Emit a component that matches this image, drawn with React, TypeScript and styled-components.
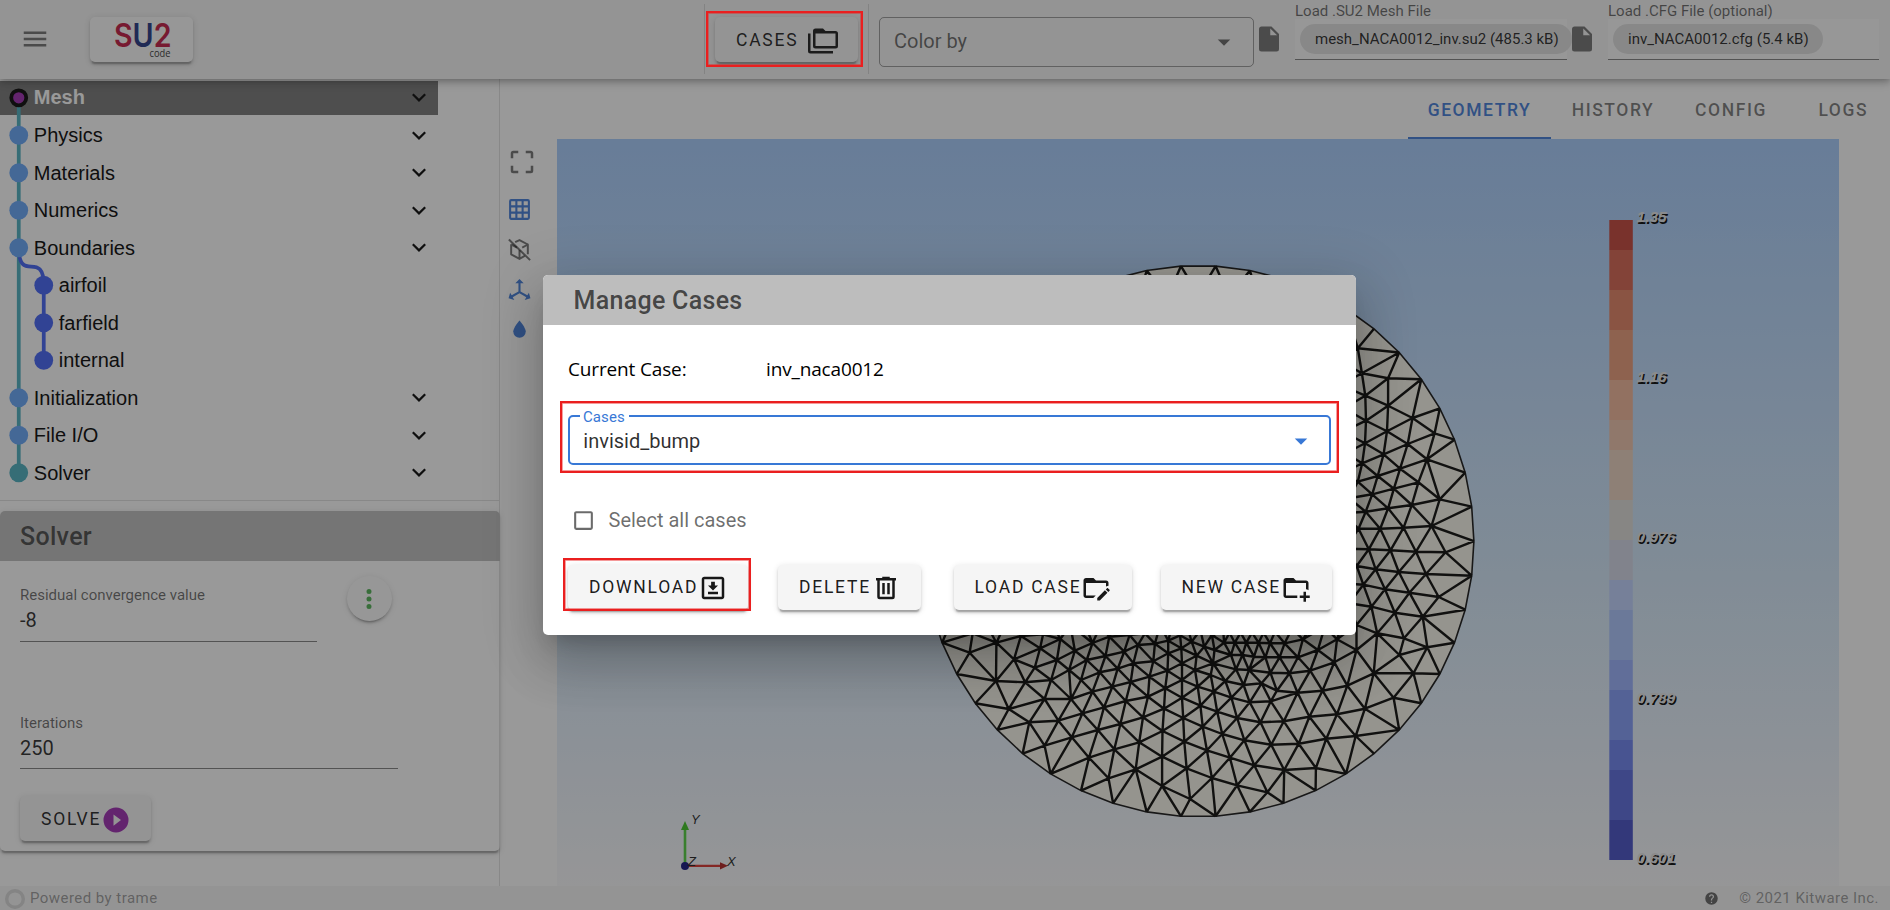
import React from "react";
import styled, { createGlobalStyle, css } from "styled-components";

/* ---------- icon paths (24 x 24 grid) ---------- */
const icons = {
  menu: "M3,6H21V8H3V6M3,11H21V13H3V11M3,16H21V18H3V16Z",
  folders:
    "M22,4H14L12,2H6A2,2 0 0,0 4,4V16A2,2 0 0,0 6,18H22A2,2 0 0,0 24,16V6A2,2 0 0,0 22,4M2,6H0V11H0V20A2,2 0 0,0 2,22H20V20H2V6M6,6V16H22V6H6Z",
  down: "M7,10L12,15L17,10H7Z",
  file: "M13,9V3.5L18.5,9M6,2C4.89,2 4,2.89 4,4V20A2,2 0 0,0 6,22H18A2,2 0 0,0 20,20V8L14,2H6Z",
  free: "M19,3H15V5H19V9H21V5C21,3.89 20.1,3 19,3M19,19H15V21H19A2,2 0 0,0 21,19V15H19M5,15H3V19A2,2 0 0,0 5,21H9V19H5M3,5V9H5V5H9V3H5A2,2 0 0,0 3,5Z",
  grid: "M10,4V8H14V4H10M16,4V8H20V4H16M16,10V14H20V10H16M16,16V20H20V16H16M14,20V16H10V20H14M8,20V16H4V20H8M8,14V10H4V14H8M8,8V4H4V8H8M10,14H14V10H10V14M4,2H20A2,2 0 0,1 22,4V20A2,2 0 0,1 20,22H4C2.92,22 2,21.1 2,20V4A2,2 0 0,1 4,2Z",
  axis: "M12,2L16,6H13V13.85L19.53,17.61L21,15.03L22.5,20.5L17,21.96L18.53,19.35L12,15.58L5.47,19.35L7,21.96L1.5,20.5L3,15.03L4.47,17.61L11,13.85V6H8L12,2Z",
  water:
    "M12,20A6,6 0 0,1 6,14C6,10 12,3.25 12,3.25C12,3.25 18,10 18,14A6,6 0 0,1 12,20Z",
  dots: "M12,16A2,2 0 0,1 14,18A2,2 0 0,1 12,20A2,2 0 0,1 10,18A2,2 0 0,1 12,16M12,10A2,2 0 0,1 14,12A2,2 0 0,1 12,14A2,2 0 0,1 10,12A2,2 0 0,1 12,10M12,4A2,2 0 0,1 14,6A2,2 0 0,1 12,8A2,2 0 0,1 10,6A2,2 0 0,1 12,4Z",
  play: "M10,16.5V7.5L16,12M12,2A10,10 0 0,0 2,12A10,10 0 0,0 12,22A10,10 0 0,0 22,12A10,10 0 0,0 12,2Z",
  help: "M15.07,11.25L14.17,12.17C13.45,12.89 13,13.5 13,15H11V14.5C11,13.39 11.45,12.39 12.17,11.67L13.41,10.41C13.78,10.05 14,9.55 14,9C14,7.89 13.1,7 12,7A2,2 0 0,0 10,9H8A4,4 0 0,1 12,5A4,4 0 0,1 16,9C16,9.88 15.64,10.67 15.07,11.25M13,19H11V17H13M12,2A10,10 0 0,0 2,12A10,10 0 0,0 12,22A10,10 0 0,0 22,12C22,6.47 17.5,2 12,2Z",
  download:
    "M5 3H19C20.1 3 21 3.9 21 5V19C21 20.11 20.11 21 19 21H5C3.9 21 3 20.11 3 19V5C3 3.9 3.9 3 5 3M5 5V19H19V5H5M8 17V15H16V17H8M16 10L12 14L8 10H10.5V7H13.5V10H16Z",
  trash:
    "M9,3V4H4V6H5V19A2,2 0 0,0 7,21H17A2,2 0 0,0 19,19V6H20V4H15V3H9M7,6H17V19H7V6M9,8V17H11V8H9M13,8V17H15V8H13Z",
  folderEdit:
    "M4 18H11.8L9.8 20H4C2.9 20 2 19.1 2 18V6C2 4.9 2.89 4 4 4H10L12 6H20A2 2 0 0 1 22 8V10.17L20.41 10.59L20 11V8H4V18M22.85 14.19L21.87 15.17L19.83 13.13L20.81 12.15C21 11.95 21.33 11.95 21.53 12.15L22.85 13.47C23.05 13.67 23.05 14 22.85 14.19M13 19.94L19.12 13.81L21.16 15.85L15.04 22H13V19.94Z",
  folderPlus:
    "M13 19C13 19.34 13.04 19.67 13.09 20H4C2.9 20 2 19.11 2 18V6C2 4.89 2.89 4 4 4H10L12 6H20C21.1 6 22 6.89 22 8V13.81C21.39 13.46 20.72 13.22 20 13.09V8H4V18H13.09C13.04 18.33 13 18.66 13 19M20 18V15H18V18H15V20H18V23H20V20H23V18H20Z",
  checkbox:
    "M19,3H5C3.89,3 3,3.89 3,5V19A2,2 0 0,0 5,21H19A2,2 0 0,0 21,19V5C21,3.89 20.1,3 19,3M19,5V19H5V5H19Z",
};

type IconName = keyof typeof icons;

const IconSvg = styled.svg<{ $size: number }>`
  display: block;
  flex: none;
  width: ${(p) => p.$size}px;
  height: ${(p) => p.$size}px;
`;

const Icon = ({
  name,
  size = 30,
  color = "currentColor",
}: {
  name: IconName;
  size?: number;
  color?: string;
}) => (
  <IconSvg viewBox="0 0 24 24" $size={size}>
    <path d={icons[name]} fill={color} fillRule="evenodd" />
  </IconSvg>
);

/* ---------- mesh geometry ---------- */
type Pt = [number, number];
const CX = 1198.3 - 557;
const CY = 541.2 - 139;
const R = 275.6;

const lower: number[] = [
  182, 158, 252, 128, 190, 100, 251, 243, 298, 178, 327, 247, 316, 108, 352, 203, 366, 145, 374, 103,
  410, 180, 419, 117, 395, 240, 442, 210, 457, 152, 473, 240, 488, 180, 503, 129, 522, 217, 537, 168,
  547, 110, 569, 206, 586, 155, 600, 105, 622, 135, 610, 190, 603, 246, 652, 230, 662, 184, 666, 131,
  701, 122, 701, 160, 699, 212, 693, 265, 732, 106, 735, 145, 737, 190, 737, 240, 775, 167, 771, 210,
  762, 125, 795, 140, 778, 260, 818, 190, 812, 225, 822, 150, 850, 243, 847, 128, 865, 165, 878, 208,
  875, 128, 895, 165, 912, 210, 898, 255, 905, 128, 925, 170, 945, 250, 937, 128, 955, 172, 968, 218,
  967, 130, 992, 172, 1005, 130, 1018, 220, 1040, 172, 1053, 118, 1092, 150, 1072, 212, 1135, 187,
  1142, 118, 985, 272, 1039, 278, 1104, 272, 1169, 257, 1193, 150, 1238, 220, 1247, 100, 1305, 165,
  1317, 115, 1378, 142, 1342, 220, 1293, 38, 1232, 20, 1366, 50, 1290, 293, 1215, 326, 1193, 75,
  284, 327, 338, 367, 378, 297, 447, 297, 503, 275, 555, 260, 414, 362, 477, 340, 533, 322, 590, 303,
  648, 290, 737, 293, 690, 326, 785, 317, 829, 335, 820, 275, 866, 293, 914, 307, 969, 304, 378, 437,
  449, 412, 517, 390, 576, 372, 635, 352, 740, 354, 686, 393, 791, 380, 842, 402, 881, 354, 942, 367,
  1003, 364, 1070, 350, 1142, 343, 1191, 408, 1114, 416, 1042, 431, 970, 434, 900, 421, 494, 473,
  560, 448, 625, 427, 743, 425, 802, 451, 862, 473, 926, 496, 685, 470, 616, 508, 749, 505, 815, 534,
  881, 556, 960, 577, 1004, 510, 1087, 504, 545, 535, 685, 558, 758, 597,
  135, 60, 215, 50, 280, 60, 345, 70, 395, 65, 445, 75, 480, 65, 525, 75, 565, 65, 615, 75, 640, 100,
  680, 75, 715, 60, 750, 75, 785, 90, 815, 105, 845, 95, 861, 98, 890, 98, 920, 98, 950, 98, 980, 95,
  1025, 85, 1080, 70, 1110, 80, 1160, 60,
];

const right: number[] = [
  1155, 265, 1167, 340, 1243, 355, 1177, 407, 1243, 437, 1314, 474, 1179, 482, 1240, 514, 1378, 520,
  1176, 550, 1230, 583, 1300, 552, 1356, 598, 1168, 610, 1213, 648, 1278, 626, 1331, 667, 1155, 665,
  1197, 703, 1260, 686, 1393, 718, 1178, 755, 1243, 745, 1312, 735, 1369, 798, 1157, 806, 1220, 806,
  1288, 803, 1187, 868, 1250, 871, 1324, 875, 1410, 877, 1152, 918, 1207, 928, 1274, 936, 1353, 942,
  1171, 974, 1234, 988, 1305, 998, 1390, 1011, 1100, 300, 1105, 375, 1115, 445, 1112, 515, 1120, 580,
  1110, 640, 1130, 715, 1110, 760, 1095, 806, 1120, 866, 1090, 915, 1110, 970, 1130, 1030,
];

const buildPoints = (): Pt[] => {
  const pts: Pt[] = [];
  for (let k = 0; k < 50; k++) {
    const a = (k * 2 * Math.PI) / 50;
    pts.push([CX + R * Math.cos(a), CY + R * Math.sin(a)]);
  }
  for (let i = 0; i < lower.length; i += 2)
    pts.push([900 - 557 + lower[i] / 2.6133, 600 - 139 + lower[i + 1] / 3]);
  for (let i = 0; i < right.length; i += 2)
    pts.push([960 - 557 + right[i] / 2.9037, 260 - 139 + right[i + 1] / 3]);
  for (let k = 27; k < 42; k++) {
    const a = ((k + 0.5) * 2 * Math.PI) / 50;
    pts.push([CX + 246 * Math.cos(a), CY + 246 * Math.sin(a)]);
  }
  return pts;
};

/* Bowyer–Watson triangulation, returned as one path of edges */
const triangulate = (input: Pt[]): string => {
  const n = input.length;
  const p: Pt[] = [...input, [-90000, -80000], [90000, -80000], [0, 120000]];
  type Tri = { v: [number, number, number]; x: number; y: number; r: number };
  const make = (a: number, b: number, c: number): Tri => {
    const [ax, ay] = p[a];
    const bx = p[b][0] - ax;
    const by = p[b][1] - ay;
    const cx = p[c][0] - ax;
    const cy = p[c][1] - ay;
    const d = 2 * (bx * cy - by * cx) || 1e-9;
    const ux = (cy * (bx * bx + by * by) - by * (cx * cx + cy * cy)) / d;
    const uy = (bx * (cx * cx + cy * cy) - cx * (bx * bx + by * by)) / d;
    return { v: [a, b, c], x: ax + ux, y: ay + uy, r: ux * ux + uy * uy };
  };
  let tris: Tri[] = [make(n, n + 1, n + 2)];
  for (let i = 0; i < n; i++) {
    const edges = new Map<string, [number, number]>();
    const keep: Tri[] = [];
    for (const t of tris) {
      const dx = p[i][0] - t.x;
      const dy = p[i][1] - t.y;
      if (dx * dx + dy * dy < t.r) {
        for (const [a, b] of [
          [t.v[0], t.v[1]],
          [t.v[1], t.v[2]],
          [t.v[2], t.v[0]],
        ]) {
          const key = a < b ? `${a}-${b}` : `${b}-${a}`;
          if (edges.has(key)) edges.delete(key);
          else edges.set(key, [a, b]);
        }
      } else keep.push(t);
    }
    edges.forEach(([a, b]) => keep.push(make(a, b, i)));
    tris = keep;
  }
  const seen = new Set<string>();
  let d = "";
  for (const t of tris) {
    if (t.v.some((v) => v >= n)) continue;
    for (let e = 0; e < 3; e++) {
      const a = Math.min(t.v[e], t.v[(e + 1) % 3]);
      const b = Math.max(t.v[e], t.v[(e + 1) % 3]);
      if (b < 50 || seen.has(`${a}-${b}`)) continue;
      seen.add(`${a}-${b}`);
      d += `M${p[a][0].toFixed(1)} ${p[a][1].toFixed(1)}L${p[b][0].toFixed(1)} ${p[b][1].toFixed(1)}`;
    }
  }
  return d;
};

const points = buildPoints();
const meshEdges = triangulate(points);
const rim = points
  .slice(0, 50)
  .map((q) => q.map((c) => c.toFixed(1)).join(","))
  .join(" ");

/* ---------- base ---------- */
const Global = createGlobalStyle`
  * { box-sizing: border-box; }
  body { margin: 0; overflow: hidden; font-family: Roboto, "Liberation Sans", sans-serif; color: rgba(0,0,0,.87); }
`;

const Page = styled.div`
  position: relative;
  display: flex;
  flex-direction: column;
  width: 1890px;
  height: 910px;
  overflow: hidden;
  background: #fff;
`;

const raised = css`
  box-shadow: 0 3.75px 1.25px -2.5px rgba(0, 0, 0, 0.2), 0 2.5px 2.5px rgba(0, 0, 0, 0.14),
    0 1.25px 6.25px rgba(0, 0, 0, 0.12);
`;

/* ---------- toolbar ---------- */
const TopBar = styled.header`
  position: relative;
  z-index: 2;
  display: flex;
  flex: none;
  height: 79px;
  background: #f5f5f5;
  box-shadow: 0 2.5px 5px -1.25px rgba(0, 0, 0, 0.2), 0 5px 6.25px rgba(0, 0, 0, 0.14),
    0 1.25px 12.5px rgba(0, 0, 0, 0.12);
`;

const MenuButton = styled.div`
  margin: 23.5px 40px 0 20px;
  color: rgba(0, 0, 0, 0.54);
`;

const LogoCard = styled.div`
  width: 103px;
  height: 45px;
  margin-top: 17px;
  border-radius: 5px;
  background: #fcfcfc;
  ${raised}
  svg {
    display: block;
  }
`;

const Divider = styled.div<{ $left: number }>`
  width: 1px;
  height: 70px;
  margin: 4px 0 0 ${(p) => p.$left}px;
  background: rgba(0, 0, 0, 0.12);
`;

const Button = styled.button<{ $w: number; $gap?: number; $left?: number }>`
  display: flex;
  align-items: center;
  flex: none;
  width: ${(p) => p.$w}px;
  height: 45px;
  margin: 0 0 0 ${(p) => p.$left ?? 0}px;
  padding: 2px 18px 0 21px;
  border: 0;
  border-radius: 5px;
  background: #f5f5f5;
  color: rgba(0, 0, 0, 0.9);
  font: 400 17.5px/1 Roboto, sans-serif;
  letter-spacing: 1.75px;
  white-space: nowrap;
  ${raised}
  svg {
    margin-left: ${(p) => p.$gap ?? 0}px;
  }
`;

const BarSlot = styled.div<{ $left: number; $top: number }>`
  margin: ${(p) => p.$top}px 0 0 ${(p) => p.$left}px;
  color: rgba(0, 0, 0, 0.54);
`;

const ColorBy = styled.div`
  display: flex;
  align-items: center;
  justify-content: space-between;
  width: 375px;
  height: 50px;
  margin: 17px 0 0 10px;
  padding: 0 14px;
  border: 1px solid rgba(0, 0, 0, 0.38);
  border-radius: 5px;
  color: rgba(0, 0, 0, 0.6);
  font-size: 20px;
  span {
    padding-bottom: 2px;
  }
`;

const FileField = styled.div<{ $left: number; $w: number }>`
  width: ${(p) => p.$w}px;
  margin-left: ${(p) => p.$left}px;
  font-size: 15px;
`;

const FileLabel = styled.div`
  height: 19px;
  padding-top: 2px;
  line-height: 18px;
  color: rgba(0, 0, 0, 0.6);
  font-size: 15px;
  white-space: nowrap;
`;

const FileInput = styled.div`
  height: 41px;
  padding: 5px 0 0 5px;
  border-bottom: 1px solid rgba(0, 0, 0, 0.5);
  background: #fcfcfc;
`;

const Chip = styled.span<{ $w: number }>`
  display: block;
  width: ${(p) => p.$w}px;
  height: 30px;
  padding-left: 15px;
  border-radius: 15px;
  background: #e0e0e0;
  font-size: 15px;
  line-height: 30px;
  white-space: nowrap;
`;

/* ---------- drawer ---------- */
const Body = styled.div`
  display: flex;
  flex: none;
  height: 807px;
`;

const Drawer = styled.aside`
  width: 500px;
  flex: none;
  border-right: 1px solid rgba(0, 0, 0, 0.12);
`;

const Tree = styled.div`
  position: relative;
  height: 422px;
  border-bottom: 1px solid rgba(0, 0, 0, 0.12);
`;

const TreeLines = styled.svg`
  position: absolute;
  left: 0;
  top: 0;
`;

const TreeRow = styled.div<{ $child?: boolean; $on?: boolean }>`
  display: flex;
  align-items: center;
  justify-content: space-between;
  width: 438px;
  height: 37.5px;
  padding: 0 12px 0 ${(p) => (p.$child ? 58.8 : 33.8)}px;
  border-bottom: 2px solid transparent;
  border-top: 2px solid transparent;
  background: ${(p) => (p.$on ? "#757575" : "transparent")};
  background-clip: padding-box;
  color: ${(p) => (p.$on ? "#fff" : "#000")};
  font: ${(p) => (p.$on ? 700 : 400)} 20px/1 "Liberation Sans", Arial, sans-serif;
  span {
    padding-bottom: ${(p) => (p.$on ? 2 : 0)}px;
  }
`;

const Card = styled.section`
  height: 340px;
  margin: 10px -1px 0 0;
  border-radius: 5px;
  ${raised}
`;

const CardTitle = styled.h2<{ $pad: number }>`
  height: 50px;
  margin: 0;
  padding-left: ${(p) => p.$pad}px;
  border-radius: 5px 5px 0 0;
  background: #bdbdbd;
  color: rgba(0, 0, 0, 0.65);
  font: 500 25px/52px Roboto, sans-serif;
  letter-spacing: 0.3px;
`;

const CardBody = styled.div`
  padding: 0 0 0 20px;
`;

const FieldRow = styled.div`
  display: flex;
  height: 128px;
`;

const Field = styled.div<{ $w: number; $h: number }>`
  width: ${(p) => p.$w}px;
  height: ${(p) => p.$h}px;
  padding-top: 25px;
  border-bottom: 1px solid rgba(0, 0, 0, 0.5);
  font-size: 20px;
  line-height: 26px;
  label {
    display: block;
    height: 21px;
    color: rgba(0, 0, 0, 0.6);
    font-size: 15px;
    line-height: 18px;
  }
`;

const Fab = styled.div`
  display: flex;
  align-items: center;
  justify-content: center;
  width: 45px;
  height: 45px;
  margin: 15px 0 0 29.5px;
  border-radius: 50%;
  background: #fcfcfc;
  ${raised}
`;

const SolveSlot = styled.div`
  padding-top: 27px;
`;

/* ---------- main area ---------- */
const Main = styled.main`
  display: flex;
  flex: 1;
  flex-direction: column;
  overflow: hidden;
`;

const Tabs = styled.nav`
  display: flex;
  flex: none;
  height: 60px;
  padding-left: 908px;
`;

const Tab = styled.div<{ $w: number; $on?: boolean }>`
  display: flex;
  align-items: center;
  justify-content: center;
  flex: none;
  width: ${(p) => p.$w}px;
  padding-top: 3px;
  border-bottom: 2px solid ${(p) => (p.$on ? "#3f7ad9" : "transparent")};
  color: ${(p) => (p.$on ? "#3f7ad9" : "rgba(0,0,0,.54)")};
  font-size: 17.5px;
  font-weight: 500;
  letter-spacing: 1.5625px;
`;

const Stage = styled.div`
  display: flex;
  height: 747px;
`;

const Tools = styled.div`
  display: flex;
  flex-direction: column;
  align-items: center;
  width: 57px;
  padding: 8px 17.3px 0 0;
  color: #3f7ad9;
`;

const ToolSlot = styled.div<{ $top: number; $muted?: boolean; $shift?: number }>`
  margin-top: ${(p) => p.$top}px;
  padding-left: ${(p) => p.$shift ?? 0}px;
  ${(p) => p.$muted && "color: rgba(0,0,0,.56);"}
`;

const View = styled.div`
  width: 1282px;
  height: 747px;
  background: linear-gradient(#a4cbfd, #d2e7fa 58%, #f9f9fc);
  svg {
    display: block;
  }
`;

const Footer = styled.footer`
  display: flex;
  align-items: center;
  height: 24px;
  padding: 1px 11px 0 5px;
  background: #f5f5f5;
  color: rgba(0, 0, 0, 0.38);
  font-size: 15px;
  letter-spacing: 0.45px;
`;

const Grow = styled.div`
  flex: 1;
`;

const FootText = styled.span<{ $left: number }>`
  margin-left: ${(p) => p.$left}px;
  padding-bottom: 2px;
  color: rgba(0, 0, 0, 0.4);
`;

const HelpSlot = styled.span`
  color: rgba(0, 0, 0, 0.6);
`;

/* ---------- dialog ---------- */
const Scrim = styled.div`
  position: absolute;
  inset: 0;
  z-index: 5;
  background: rgba(33, 33, 33, 0.46);
`;

const Dialog = styled.div`
  position: absolute;
  z-index: 6;
  left: 543px;
  top: 275px;
  width: 813px;
  height: 360px;
  border-radius: 5px;
  background: #fff;
  box-shadow: 0 13.75px 18.75px -8.75px rgba(0, 0, 0, 0.2), 0 30px 47.5px 3.75px rgba(0, 0, 0, 0.14),
    0 11.25px 57.5px 10px rgba(0, 0, 0, 0.12);
`;

const DialogBody = styled.div`
  padding: 0 25px;
`;

const Current = styled.div`
  display: flex;
  height: 90px;
  padding-top: 29px;
  color: #000;
  font: 19px/30px "Open Sans", "Noto Sans", sans-serif;
  letter-spacing: -0.15px;
  span {
    width: 198px;
  }
`;

const Select = styled.fieldset`
  position: relative;
  display: flex;
  align-items: center;
  justify-content: space-between;
  width: 763px;
  height: 50px;
  margin: 0;
  padding: 2px 13.5px 0 13.3px;
  border: 2px solid #3878d6;
  border-radius: 5px;
  color: #3878d6;
  font-size: 20px;
`;

const SelectLabel = styled.span`
  position: absolute;
  left: 10px;
  top: -9px;
  width: 49px;
  padding-left: 3px;
  background: #fff;
  font-size: 15px;
  line-height: 18px;
  letter-spacing: 0.1px;
`;

const Value = styled.span`
  padding-bottom: 1px;
  color: rgba(0, 0, 0, 0.82);
`;

const Check = styled.label`
  display: flex;
  align-items: center;
  height: 25px;
  margin: 43px 0 31.5px 3px;
  color: rgba(0, 0, 0, 0.58);
  font-size: 20px;
  span {
    margin-left: 12.5px;
    padding-bottom: 2px;
  }
`;

const Actions = styled.div`
  display: flex;
`;

const Marker = styled.div<{ $x: number; $y: number; $w: number; $h: number }>`
  position: absolute;
  z-index: 7;
  left: ${(p) => p.$x}px;
  top: ${(p) => p.$y}px;
  width: ${(p) => p.$w}px;
  height: ${(p) => p.$h}px;
  border: 2px solid #ea1f1f;
  box-shadow: inset 0 0 0 0.7px rgba(234, 31, 31, 0.6);
`;

/* ---------- pieces ---------- */
const Logo = () => (
  <svg width="103" height="45" viewBox="0 0 103 45">
    <text
      x="24"
      y="30"
      textLength="57.5"
      lengthAdjust="spacingAndGlyphs"
      fontFamily="Inter, Roboto, sans-serif"
      fontWeight="600"
      fontSize="32.5"
      fill="#c01540"
    >
      S<tspan fill="#1e3282">U</tspan>2
    </text>
    <text x="59.5" y="40.3" textLength="21" lengthAdjust="spacingAndGlyphs" fontFamily="Open Sans, sans-serif" fontSize="10.5" fill="#333">
      code
    </text>
  </svg>
);

const rows: { label: string; child?: boolean; on?: boolean }[] = [
  { label: "Mesh", on: true },
  { label: "Physics" },
  { label: "Materials" },
  { label: "Numerics" },
  { label: "Boundaries" },
  { label: "airfoil", child: true },
  { label: "farfield", child: true },
  { label: "internal", child: true },
  { label: "Initialization" },
  { label: "File I/O" },
  { label: "Solver" },
];

const rowY = (i: number) => 18.75 + i * 37.5;

const Chevron = () => (
  <svg width="14" height="9" viewBox="0 0 14 9">
    <path d="M0.8 1.2L7 7.4L13.2 1.2" fill="none" stroke="#000" strokeWidth="2.2" />
  </svg>
);

const TreePanel = () => (
  <Tree>
    {rows.map((r) => (
      <TreeRow key={r.label} $child={r.child} $on={r.on}>
        <span>{r.label}</span>
        {!r.child && <Chevron />}
      </TreeRow>
    ))}
    <TreeLines width="60" height="420">
      <path d={`M18.75 ${rowY(0)}V${rowY(10)}`} stroke="#48aebf" strokeWidth="3.75" />
      <path
        d={`M18.75 ${rowY(4)}C18.75 ${rowY(4) + 18} 25 ${rowY(4) + 18.75} 31.2 ${rowY(4) + 18.75}S43.75 ${rowY(4) + 20} 43.75 ${rowY(5)}V${rowY(7)}`}
        fill="none"
        stroke="#4060f5"
        strokeWidth="3.75"
      />
      {rows.map((r, i) => (
        <circle
          key={r.label}
          cx={r.child ? 43.75 : 18.75}
          cy={rowY(i)}
          r={i === 0 ? 7.5 : 9.4}
          fill={i === 0 ? "#9c27b0" : r.child ? "#4060f5" : i === 10 ? "#48aebf" : "#62a4fa"}
          stroke={i === 0 ? "#000" : "none"}
          strokeWidth="3.75"
        />
      ))}
    </TreeLines>
  </Tree>
);

const CubeOff = () => (
  <IconSvg viewBox="0 0 24 24" $size={25}>
    <g fill="none" stroke="currentColor" strokeWidth="1.9" strokeLinejoin="round">
      <path d="M4 7V16.6L12 21V12.6M20 16.5V7.2L14.6 10.2M7.8 5L12 2.9L20 7.2M4 7L9.5 10.2M12 21L17 18.2" />
      <path d="M1.8 2.4L22.2 22.2" />
    </g>
  </IconSvg>
);

const scale: [number, string][] = [
  [220, "#c44137"], [250, "#d7604c"], [290, "#e48060"], [330, "#eb9a76"], [380, "#f3b598"],
  [420, "#efc2aa"], [450, "#ebd1bf"], [500, "#dedcd9"], [540, "#d3d7e7"], [580, "#bfd1ff"],
  [610, "#aac4ff"], [660, "#98b0ff"], [690, "#809afa"], [740, "#6980f1"], [770, "#5768de"],
  [820, "#434cc6"], [860, ""],
];

const scaleLabels: [number, string][] = [
  [218, "1.35"], [378, "1.16"], [538, "0.976"], [699, "0.789"], [859, "0.601"],
];

const ScaleText = styled.text`
  font: italic 700 15.5px "Liberation Sans", sans-serif;
  fill: #e6e6e6;
  text-shadow: 1.3px 1.3px 0.5px #000;
`;

const Scene = () => (
  <svg width="1282" height="747" viewBox="0 0 1282 747">
    <polygon points={rim} fill="#f8f5ea" stroke="#111" strokeWidth="1.6" />
    <path d={meshEdges} stroke="#050503" strokeWidth="2.4" fill="none" />
    {scale.slice(0, -1).map(([y, c], i) => (
      <rect key={y} x="1052.3" y={y - 139} width="23.5" height={scale[i + 1][0] - y} fill={c} />
    ))}
    {scaleLabels.map(([y, t]) => (
      <ScaleText key={t} x="1079.5" y={y - 139 + 4.3}>
        {t}
      </ScaleText>
    ))}
    <path d="M128 727V690" stroke="#4fd03a" strokeWidth="2.6" />
    <path d="M128 682L132 691H124Z" fill="#3ac41f" />
    <path d="M128 726.8H165" stroke="#d92f2a" strokeWidth="2.2" />
    <path d="M171 726.8L163 723.2V730.4Z" fill="#b01c1c" />
    <circle cx="128" cy="727" r="4" fill="#10107c" />
    <g fontFamily="Liberation Sans, sans-serif" fontStyle="italic" fontSize="13" fill="#1a1a1a">
      <text x="134" y="684.5">Y</text>
      <text x="170" y="726.5">X</text>
      <text x="131" y="727">Z</text>
    </g>
  </svg>
);

const App = () => (
  <Page>
    <Global />
    <TopBar>
      <MenuButton>
        <Icon name="menu" />
      </MenuButton>
      <LogoCard>
        <Logo />
      </LogoCard>
      <Divider $left={511} />
      <BarSlot $left={10} $top={17}>
        <Button $w={143} $gap={9.5}>
          CASES
          <Icon name="folders" />
        </Button>
      </BarSlot>
      <Divider $left={10} />
      <ColorBy>
        <span>Color by</span>
        <Icon name="down" />
      </ColorBy>
      <BarSlot $left={-0.5} $top={23.5}>
        <Icon name="file" />
      </BarSlot>
      <FileField $left={11.5} $w={272}>
        <FileLabel>Load .SU2 Mesh File</FileLabel>
        <FileInput>
          <Chip $w={272}>mesh_NACA0012_inv.su2 (485.3 kB)</Chip>
        </FileInput>
      </FileField>
      <BarSlot $left={-0.5} $top={23.5}>
        <Icon name="file" />
      </BarSlot>
      <FileField $left={11.5} $w={271}>
        <FileLabel>Load .CFG File (optional)</FileLabel>
        <FileInput>
          <Chip $w={210}>inv_NACA0012.cfg (5.4 kB)</Chip>
        </FileInput>
      </FileField>
    </TopBar>
    <Body>
      <Drawer>
        <TreePanel />
        <Card>
          <CardTitle $pad={20}>Solver</CardTitle>
          <CardBody>
            <FieldRow>
              <Field $w={297} $h={81}>
                <label>Residual convergence value</label>-8
              </Field>
              <Fab>
                <Icon name="dots" color="#4caf50" />
              </Fab>
            </FieldRow>
            <Field $w={378} $h={80}>
              <label>Iterations</label>250
            </Field>
            <SolveSlot>
              <Button $w={131}>
                SOLVE
                <Icon name="play" color="#9c27b0" />
              </Button>
            </SolveSlot>
          </CardBody>
        </Card>
      </Drawer>
      <Main>
        <Tabs>
          <Tab $w={143} $on>GEOMETRY</Tab>
          <Tab $w={124}>HISTORY</Tab>
          <Tab $w={112}>CONFIG</Tab>
          <Tab $w={112.5}>LOGS</Tab>
        </Tabs>
        <Stage>
          <Tools>
            <ToolSlot $top={0} $muted $shift={4.5}>
              <Icon name="free" />
            </ToolSlot>
            <ToolSlot $top={20}>
              <Icon name="grid" size={25} />
            </ToolSlot>
            <ToolSlot $top={15} $muted>
              <CubeOff />
            </ToolSlot>
            <ToolSlot $top={15}>
              <Icon name="axis" size={25} />
            </ToolSlot>
            <ToolSlot $top={15}>
              <Icon name="water" size={25} />
            </ToolSlot>
          </Tools>
          <View>
            <Scene />
          </View>
        </Stage>
      </Main>
    </Body>
    <Footer>
      <svg width="20" height="20">
        <circle cx="10" cy="10" r="8.3" fill="none" stroke="#d8d8d8" strokeWidth="3.4" />
      </svg>
      <FootText $left={5}>Powered by trame</FootText>
      <Grow />
      <HelpSlot>
        <Icon name="help" size={15} />
      </HelpSlot>
      <FootText $left={20}>© 2021 Kitware Inc.</FootText>
    </Footer>
    <Scrim />
    <Dialog>
      <CardTitle $pad={30.5}>Manage Cases</CardTitle>
      <DialogBody>
        <Current>
          <span>Current Case:</span>
          inv_naca0012
        </Current>
        <Select>
          <SelectLabel>Cases</SelectLabel>
          <Value>invisid_bump</Value>
          <Icon name="down" />
        </Select>
        <Check>
          <Icon name="checkbox" size={25} />
          <span>Select all cases</span>
        </Check>
        <Actions>
          <Button $w={180}>
            DOWNLOAD
            <Icon name="download" />
          </Button>
          <Button $w={142.5} $left={30}>
            DELETE
            <Icon name="trash" />
          </Button>
          <Button $w={178} $left={33}>
            LOAD CASE
            <Icon name="folderEdit" />
          </Button>
          <Button $w={171} $left={29}>
            NEW CASE
            <Icon name="folderPlus" />
          </Button>
        </Actions>
      </DialogBody>
    </Dialog>
    <Marker $x={705.5} $y={11} $w={157.5} $h={56} />
    <Marker $x={560} $y={401} $w={779} $h={72} />
    <Marker $x={563} $y={558} $w={188} $h={53} />
  </Page>
);

export default App;
